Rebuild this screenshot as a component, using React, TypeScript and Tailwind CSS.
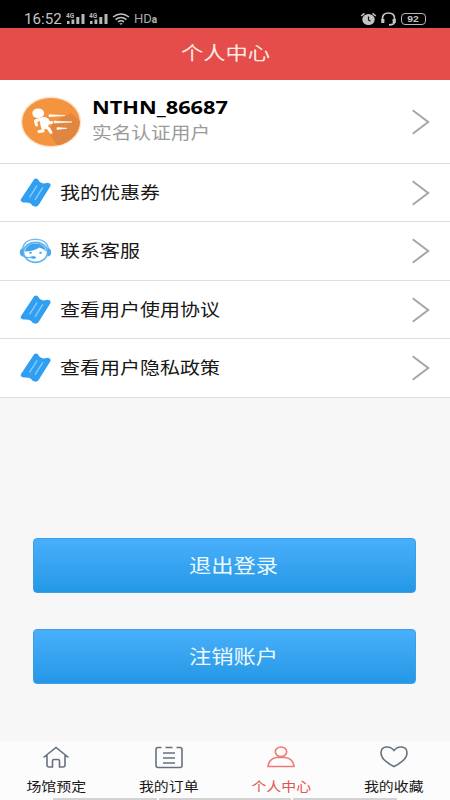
import React from "react";

const font = 'font-["Noto_Sans","Noto_Sans_CJK_SC",sans-serif]';

function Ticket() {
  return (
    <svg className="block h-[30px] w-[32px]" viewBox="0 0 32 30">
      <path d="M15.300 1Q17 0 18.500 1L19.600 2.200Q20.500 4.800 23.400 5.300Q26 5.600 28 4.700L30.500 5.300Q32.200 6.300 31.200 8.500L19.800 26.700Q18.300 28.900 16 28.600L13.500 27.800Q12.500 25.300 9.500 24.700Q6.500 24.200 4.500 24.600L2.500 23.700Q1.100 22.700 2 21Z" fill="#319ff1" />
      <path d="M17.800 7.800L10.800 19M23.500 9.800L16.200 21.500" stroke="#8bd0ff" strokeWidth="1.300" fill="none" strokeLinecap="round" />
    </svg>
  );
}

function Support() {
  return (
    <svg className="block h-[26px] w-[34px]" viewBox="0 0 34 26" fill="none">
      <path d="M3.500 11C4.500 4.500 10 1.200 16.500 1.200S28.500 4.500 29.500 11" stroke="#6fbbf2" strokeWidth="1.500" />
      <ellipse cx="16.500" cy="14.300" rx="12" ry="10" fill="#fff" stroke="#62b4ef" strokeWidth="1.700" />
      <path d="M6 13.500C6.500 8.500 11 5.500 16.500 5.500S26.500 8.500 27 13.500Q25 10.800 20.500 9.500Q14 13.500 6 13.500Z" fill="#3fa4ee" />
      <path d="M4.500 10Q.500 11 .800 14.500Q1 18.500 4.500 18.500ZM28.500 10Q32.500 11 32.200 14.500Q32 18.500 28.500 18.500Z" fill="#4aa9ef" />
      <path d="M4 18Q7 20.500 13.500 19.200" stroke="#62b4ef" strokeWidth="1.300" />
      <ellipse cx="14.500" cy="19.500" rx="2.500" ry="1.300" fill="#3fa4ee" />
      <ellipse cx="11.500" cy="14.800" rx="1.300" ry="1.100" fill="#3fa4ee" />
      <ellipse cx="21.500" cy="14.800" rx="1.300" ry="1.100" fill="#3fa4ee" />
    </svg>
  );
}

function Arrow() {
  return (
    <svg className="ml-auto mr-[19px] block h-[28px] w-[20px]" viewBox="0 0 20 28" fill="none">
      <path d="M1.700 2.200L17.200 14L1.700 25.800" stroke="#a6a6a6" strokeWidth="2" />
    </svg>
  );
}

function Avatar() {
  return (
    <svg className="ml-5 block h-[52px] w-[62px]" viewBox="0 0 62 52">
      <defs>
        <clipPath id="disc"><ellipse cx="31" cy="26" rx="28.800" ry="24" /></clipPath>
      </defs>
      <ellipse cx="31" cy="26" rx="30.300" ry="25.500" fill="#fbe3cf" />
      <ellipse cx="31" cy="26" rx="28.800" ry="24" fill="#f4943f" />
      <path clipPath="url(#disc)" d="M29 37L39 52H62V27L51 17L33 26Z" fill="#df8640" />
      <ellipse cx="18.200" cy="17.300" rx="5.900" ry="4.900" fill="#fff" />
      <path d="M24 25L24.500 29" stroke="#fff" strokeWidth="8" strokeLinecap="round" fill="none" />
      <path d="M21 23L15.500 25L16.500 29M27 23.500L29 27L31.500 26.500M23 31.500L23 35L19 35.500M26 31L29 33L31 36.500" stroke="#fff" strokeWidth="3" strokeLinecap="round" strokeLinejoin="round" fill="none" />
      <path d="M29 18.700L45 19.500L29 20.700ZM34 25L52 26L34 27ZM37 31.500L47 32.300L37 33.500Z" fill="#fff" stroke="#fff" strokeWidth=".6" />
    </svg>
  );
}

function Signal() {
  return (
    <svg className="block h-[12px] w-[20px]" viewBox="0 0 20 12" fill="#b8b8b8">
      <text x="0" y="5" fontSize="6.500" fontWeight="700" fontFamily="Roboto, sans-serif">4G</text>
      <rect x="1" y="8" width="2.500" height="3" />
      <rect x="5.500" y="6.500" width="2.800" height="4.500" />
      <rect x="10.300" y="4" width="3" height="7" />
      <rect x="15.500" y="1" width="3" height="10" />
    </svg>
  );
}

function StatusBar() {
  return (
    <div className="flex h-[28px] shrink-0 items-center bg-black pl-[24px] pt-[9px] text-[#c4c4c4]">
      <span className='w-[42px] origin-left scale-x-[1.08] whitespace-nowrap font-["Roboto",sans-serif] text-[14px] leading-4'>16:52</span>
      <Signal />
      <div className="ml-[3px]"><Signal /></div>
      <svg className="ml-[3px] block h-[12px] w-[18px]" viewBox="0 0 18 12" fill="none" stroke="#c4c4c4" strokeWidth="1.500">
        <path d="M1 4Q9-2 17 4M3.500 6.600Q9 2.300 14.500 6.600M6 8.800Q9 6.600 12 8.800" />
        <path d="M7.200 10.200L9 12L10.800 10.200Z" fill="#c4c4c4" stroke="none" />
      </svg>
      <span className='ml-[4px] flex items-baseline font-["Roboto",sans-serif] text-[13px] leading-4 text-[#a8a8a8]'>HD<b className="text-[10px] font-black leading-none">a</b></span>
      <svg className="ml-auto block h-[14px] w-[17px]" viewBox="0 0 17 14" fill="none">
        <ellipse cx="8.500" cy="7.500" rx="6.200" ry="5.600" fill="#c4c4c4" />
        <path d="M1.200 4L4.500 1.300M12.500 1.300L15.800 4" stroke="#c4c4c4" strokeWidth="1.600" />
        <path d="M8.500 4.500V8L10.500 9.200" stroke="#111" strokeWidth="1.200" />
      </svg>
      <svg className="ml-[3px] block h-[14px] w-[17px]" viewBox="0 0 17 14" fill="none" stroke="#c4c4c4">
        <path d="M2.500 8V6.500Q2.500 1 8.500 1T14.500 6.500V10Q14.500 12.800 9 12.800" strokeWidth="1.700" />
        <path d="M2.800 7V11M14.200 7V11" strokeWidth="3.200" />
      </svg>
      <span className='ml-[4px] mr-[24px] flex h-[12px] w-[25px] items-center justify-center rounded-[4px] border border-[#b8b8b8] pt-px font-["Liberation_Sans",sans-serif] text-[9px] font-bold leading-none'>
        <span className="scale-x-[1.15]">92</span>
      </span>
    </div>
  );
}

function MenuRow({ label, icon, height }: { label: string; icon: React.ReactNode; height: string }) {
  return (
    <div className={`flex shrink-0 items-center border-b border-[#dfdfdf] bg-white ${height}`}>
      <div className="ml-[19px] w-[41px]">{icon}</div>
      <span className="scale-y-[0.86] whitespace-nowrap text-[20px] leading-6 text-[#171717]">{label}</span>
      <Arrow />
    </div>
  );
}

function ActionButton({ label }: { label: string }) {
  return (
    <button className="flex h-[55px] w-full items-center justify-center rounded-[4px] border border-[#3b9ee6] bg-linear-to-b from-[#48affb] to-[#2398e5] pt-[1px] text-[22.300px] text-[#eefaff]">
      <span className="ml-[18px] scale-y-[0.86] leading-7">{label}</span>
    </button>
  );
}

const tabPaths = {
  home: "M1.500 11.500L14 1.500L26.500 11.500M5 9.500V19Q5 21 7 21H10.500V15Q10.500 13.500 12 13.500H16Q17.500 13.500 17.500 15V21H21Q23 21 23 19V9.500",
  order: "M6.500 1.500H3Q1 1.500 1 3.500V19.500Q1 21.500 3 21.500H25Q27 21.500 27 19.500V3.500Q27 1.500 25 1.500H21.500M10.500 1.500H17.500M8 7H20M8 12H20M8 17H20",
  user: "M14 1A5.700 4.800 0 1 1 14 10.600A5.700 4.800 0 1 1 14 1ZM1 20.500Q2 12.200 10 11.500H18Q26 12.200 27 20.500Z",
  heart: "M14 4.500C10-.500 1-.500 1 7C1 13 8 17.500 14 20.500C20 17.500 27 13 27 7C27-.500 18-.500 14 4.500Z",
};

function Tab({ label, path, active = false }: { label: string; path: string; active?: boolean }) {
  return (
    <div className={`flex flex-1 flex-col items-center ${active ? "text-[#df554f]" : "text-[#171717]"}`}>
      <svg className="mt-[5px] block h-[23px] w-[28px]" viewBox="0 0 28 23" fill="none" stroke={active ? "#ed7a76" : "#66717f"} strokeWidth="1.600">
        <path d={path} />
      </svg>
      <span className="mt-[7px] scale-y-[0.86] whitespace-nowrap text-[14.900px] leading-5">{label}</span>
    </div>
  );
}

export default function App() {
  return (
    <div className={`flex h-[800px] w-[450px] flex-col overflow-hidden bg-[#f7f7f7] ${font}`}>
      <StatusBar />
      <header className="flex h-[52px] shrink-0 items-center justify-center bg-[#e54d4a] pb-[2px] pl-[1px] text-[#ffebe6]">
        <span className="scale-y-[0.84] text-[22.300px] leading-7">个人中心</span>
      </header>
      <main className="flex flex-1 flex-col">
        <div className="flex h-[84px] shrink-0 items-center border-b border-[#dcdcdc] bg-white">
          <Avatar />
          <div className="-mt-[2px] ml-[10px] flex flex-col">
            <span className="h-[24px] w-[120px] origin-left scale-x-[1.118] scale-y-[0.9] whitespace-nowrap text-[19.500px] font-bold leading-6 text-black">NTHN_86687</span>
            <span className="scale-y-[0.86] text-[19.700px] leading-[26px] text-[#9b9b9b]">实名认证用户</span>
          </div>
          <Arrow />
        </div>
        <MenuRow label="我的优惠券" icon={<Ticket />} height="h-[58px]" />
        <MenuRow label="联系客服" icon={<Support />} height="h-[59px]" />
        <MenuRow label="查看用户使用协议" icon={<Ticket />} height="h-[58px]" />
        <MenuRow label="查看用户隐私政策" icon={<Ticket />} height="h-[59px]" />
        <div className="mt-[140px] flex flex-col gap-[36px] pl-[33px] pr-[34px]">
          <ActionButton label="退出登录" />
          <ActionButton label="注销账户" />
        </div>
      </main>
      <footer className="shrink-0 bg-[#fcfcfc]">
        <nav className="flex h-[57px]">
          <Tab label="场馆预定" path={tabPaths.home} />
          <Tab label="我的订单" path={tabPaths.order} />
          <Tab label="个人中心" path={tabPaths.user} active />
          <Tab label="我的收藏" path={tabPaths.heart} />
        </nav>
        <div className="flex h-[2px] gap-[2px] pl-[53px]">
          <span className="w-[104px] bg-[#d2d2d2]" />
          <span className="w-[132px] bg-[#d2d2d2]" />
          <span className="w-[104px] bg-[#d2d2d2]" />
        </div>
      </footer>
    </div>
  );
}
